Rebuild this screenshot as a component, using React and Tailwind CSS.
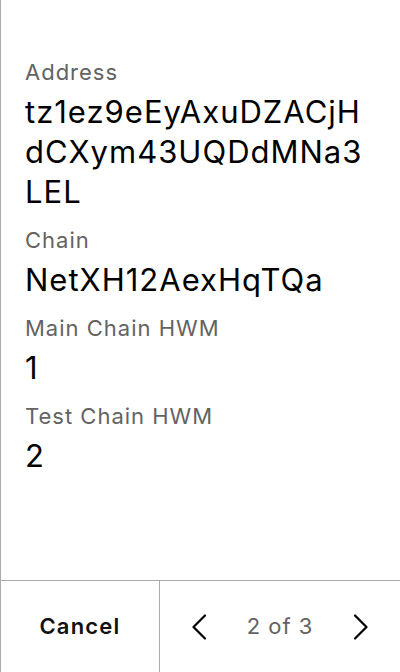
import React from "react";

const fields = [
  { label: "Address", value: "tz1ez9eEyAxuDZACjHdCXym43UQDdMNa3LEL" },
  { label: "Chain", value: "NetXH12AexHqTQa" },
  { label: "Main Chain HWM", value: "1" },
  { label: "Test Chain HWM", value: "2" },
];

export default function App() {
  return (
    <div
      className="w-[400px] h-[672px] bg-white flex flex-col border-l border-[#ababab] overflow-hidden"
      style={{ fontFamily: "Inter, 'Noto Sans', sans-serif" }}
    >
      <div className="flex-1 pt-[52px] pl-[24px] flex flex-col gap-[8px]">
        {fields.map((f) => (
          <div key={f.label} className="w-[346px] flex flex-col">
            <div className="text-[22px] leading-[40px] tracking-[1px] text-[#636363]">{f.label}</div>
            <div className="text-[31px] leading-[40px] tracking-[1px] text-black break-all">{f.value}</div>
          </div>
        ))}
      </div>
      <div className="h-[92px] border-t border-[#ababab] flex">
        <div className="w-[159px] border-r border-[#ababab] flex items-center justify-center">
          <span className="text-[22px] font-semibold tracking-[1.2px] text-[#111]">Cancel</span>
        </div>
        <div className="flex-1 flex items-center justify-between pl-[31px] pr-[31px]">
          <svg width="16" height="26" viewBox="0 0 16 26" fill="none">
            <path d="M14 1.5 L2.5 13 L14 24.5" stroke="#000" strokeWidth="2.2" strokeLinecap="round" strokeLinejoin="round" />
          </svg>
          <span className="text-[22px] tracking-[1px] text-[#636363]">2 of 3</span>
          <svg width="16" height="26" viewBox="0 0 16 26" fill="none">
            <path d="M2 1.5 L13.5 13 L2 24.5" stroke="#000" strokeWidth="2.2" strokeLinecap="round" strokeLinejoin="round" />
          </svg>
        </div>
      </div>
    </div>
  );
}
